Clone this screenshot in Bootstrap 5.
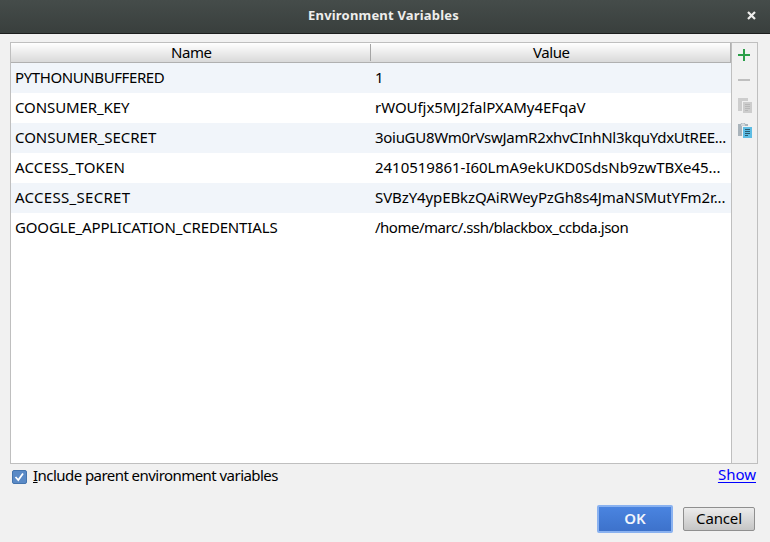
<!DOCTYPE html>
<html lang="en">
<head>
<meta charset="utf-8">
<title>Environment Variables</title>
<link rel="stylesheet" href="https://cdn.jsdelivr.net/npm/bootstrap@5.3.0/dist/css/bootstrap.min.css">
<style>
html,body{height:542px;overflow:hidden}
body{background:#f1f1f1;color:#000;font:15px/20px "Noto Sans","Open Sans",sans-serif}
.titlebar{height:34px;background:linear-gradient(#454c4a,#393f3d);border-bottom:1px solid #1b1d1d;color:#eeeeec;font-size:13px;font-weight:700;line-height:30px;letter-spacing:.19px;padding-right:3px}
.close-x{right:14px;top:11px}
.panel{margin:8px 12px 0 10px;height:422px;border:1px solid #bfbfbf}
.env-grid{background:#fff;width:721px;border-right:1px solid #bfbfbf}
.heads{height:20px;background:linear-gradient(#fff,#d9d9d9);border-bottom:1px solid #b0b0b0;border-right:1px solid #b0b0b0;line-height:18px;letter-spacing:-.4px}
.divider{width:1px;height:17px;margin-top:1px;background:#a5a5a5}
.c1{width:361px;margin-right:-2px}.c2{width:360px}
.heads .c2{padding-left:2px}
.env-row{height:30px;line-height:29px}
.env-row:nth-child(even){background:#f1f5fa}
.env-row .c2{padding-left:4px;white-space:nowrap}
.s5{letter-spacing:-.49px}.s4{letter-spacing:-.4px}.s3{letter-spacing:-.3px}.s15{letter-spacing:-.15px}.s1{letter-spacing:-.1px}.s0{letter-spacing:-.02px}.s05{letter-spacing:-.05px}
.w1{letter-spacing:.15px}.w3{letter-spacing:.3px}
.tools{padding:6px 0 0 6px}
.tools svg{display:block;margin-bottom:9px;overflow:visible}
.options{padding:1px 14px 0 12px;height:41px}
.options svg{margin:5px 6px 0 0}
.include-label{letter-spacing:-.55px}
.show-link,.show-link:hover{color:#00f}
.show-link{margin-top:-1px;text-underline-offset:2px}
.dlg-btn{font-size:15px;line-height:18px;padding:0 0 2px;border-radius:2px}
.ok-btn,.ok-btn:hover{width:76px;height:28px;border:2px solid #8ab2f0;background:linear-gradient(#4a84e0,#3d72cb);color:#f1f5fc;font-weight:600}
.cancel-btn,.cancel-btn:hover{width:72px;height:24px;border:1px solid #8f8f8f;background:linear-gradient(#ececec,#c5c5c5);color:#000;letter-spacing:-.15px}
.actions{padding-right:15px;gap:10px}
</style>
</head>
<body>
<header class="titlebar position-relative text-center">Environment Variables
<svg class="close-x position-absolute" width="9" height="9"><path d="M1 1l7 7M8 1l-7 7" stroke="#eeeeec" stroke-width="2.2"/></svg></header>
<main class="panel d-flex">
<div class="env-grid">
<div class="heads d-flex text-center"><div class="c1">Name</div><div class="divider"></div><div class="c2">Value</div></div>
<div class="env-row d-flex"><div class="c2 s4">PYTHONUNBUFFERED</div><div class="c2">1</div></div>
<div class="env-row d-flex"><div class="c2 s1">CONSUMER_KEY</div><div class="c2 s05">rWOUfjx5MJ2falPXAMy4EFqaV</div></div>
<div class="env-row d-flex"><div class="c2 s0">CONSUMER_SECRET</div><div class="c2 s3">3oiuGU8Wm0rVswJamR2xhvCInhNl3kquYdxUtREE...</div></div>
<div class="env-row d-flex"><div class="c2 w1">ACCESS_TOKEN</div><div class="c2 s0">2410519861-I60LmA9ekUKD0SdsNb9zwTBXe45...</div></div>
<div class="env-row d-flex"><div class="c2 w3">ACCESS_SECRET</div><div class="c2 s1">SVBzY4ypEBkzQAiRWeyPzGh8s4JmaNSMutYFm2r...</div></div>
<div class="env-row d-flex"><div class="c2 s15">GOOGLE_APPLICATION_CREDENTIALS</div><div class="c2 s5">/home/marc/.ssh/blackbox_ccbda.json</div></div>
</div>
<div class="tools">
<svg width="16" height="16"><path d="M0 6h12M6 0v12" stroke="#2b9f49" stroke-width="2"/></svg>
<svg width="16" height="16"><path d="M0 6h12" stroke="#bfbfbf" stroke-width="2"/></svg>
<svg width="16" height="16"><path d="M0 -1h10v3h-6v10h-4z" fill="#cdcdcd"/><path d="M5 3h9v11h-9z" fill="#cdcdcd"/><path d="M7 5.500h5M7 7.500h5M7 9.500h5M7 11.500h3" stroke="#b8b8b8"/></svg>
<svg width="16" height="16"><path d="M0 0h3v1.500h4V0h3v2h-6v10h-4z" fill="#a9b3ba"/><path d="M2.500 .5V0l1-1h3l1 1v.5z" fill="#a9b3ba"/><path d="M4 0h2" stroke="#e4e7e9"/><path d="M5 3h9v11h-9z" fill="#5dbde4"/><path d="M7 5.500h5M7 7.500h5M7 9.500h5M7 11.500h3" stroke="#2a5b70"/></svg>
</div>
</main>
<div class="options d-flex justify-content-between">
<div class="d-flex"><svg width="15" height="14"><rect x=".5" y=".5" width="14" height="13" rx="1.500" fill="#5a8ac6" stroke="#4474ad"/><path d="M3.500 7l2.800 3 4.700-6.500" fill="none" stroke="#fff" stroke-width="1.800"/></svg><span class="include-label"><u>I</u>nclude parent environment variables</span></div>
<a class="show-link" href="#">Show</a>
</div>
<div class="actions d-flex justify-content-end align-items-center">
<button class="btn dlg-btn ok-btn">OK</button><button class="btn dlg-btn cancel-btn">Cancel</button>
</div>
<script src="https://cdn.jsdelivr.net/npm/bootstrap@5.3.0/dist/js/bootstrap.bundle.min.js"></script>
</body>
</html>
